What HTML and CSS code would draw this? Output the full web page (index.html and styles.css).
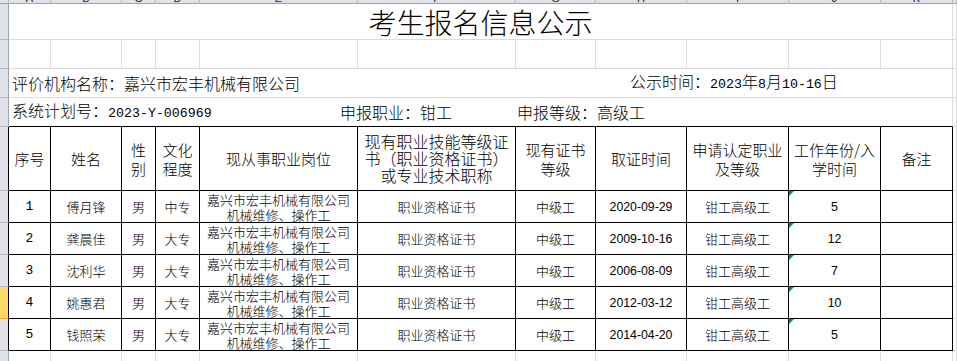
FILE: index.html
```html
<!DOCTYPE html>
<html lang="zh-CN">
<head>
<meta charset="utf-8">
<title>考生报名信息公示</title>
<link rel="stylesheet" href="styles.css">
</head>
<body>
<div class="sheet">
  <!-- column header strip -->
  <div class="ch"></div>
  <div class="ch"><span>A</span></div>
  <div class="ch"><span>B</span></div>
  <div class="ch"><span>C</span></div>
  <div class="ch"><span>D</span></div>
  <div class="ch"><span>E</span></div>
  <div class="ch"><span>F</span></div>
  <div class="ch"><span>G</span></div>
  <div class="ch"><span>H</span></div>
  <div class="ch"><span>I</span></div>
  <div class="ch"><span>J</span></div>
  <div class="ch"><span>K</span></div>
  <div class="ch"></div>

  <!-- row 1 : title -->
  <div class="rh"></div>
  <div class="c span title">考生报名信息公示</div>
  <div class="c"></div>

  <!-- row 2 : empty -->
  <div class="rh"></div>
  <div class="c"></div><div class="c"></div><div class="c"></div><div class="c"></div>
  <div class="c"></div><div class="c"></div><div class="c"></div><div class="c"></div>
  <div class="c"></div><div class="c"></div><div class="c"></div><div class="c"></div>

  <!-- row 3 -->
  <div class="rh"></div>
  <div class="c span info">
    <span class="w618">评价机构名称：嘉兴市宏丰机械有限公司</span>
    <span>公示时间：<span class="mono">2023</span>年<span class="mono">8</span>月<span class="mono">10-16</span>日</span>
  </div>
  <div class="c"></div>

  <!-- row 4 -->
  <div class="rh"></div>
  <div class="c span info last">
    <span class="w328">系统计划号：<span class="mono">2023-Y-006969</span></span>
    <span class="w177">申报职业：钳工</span>
    <span>申报等级：高级工</span>
  </div>
  <div class="c"></div>

  <!-- row 5 : table header -->
  <div class="rh tb"></div>
  <div class="c t th">序号</div>
  <div class="c t th">姓名</div>
  <div class="c t th">性<br>别</div>
  <div class="c t th">文化<br>程度</div>
  <div class="c t th">现从事职业岗位</div>
  <div class="c t th three">现有职业技能等级证<br>书（职业资格证书）<br>或专业技术职称</div>
  <div class="c t th">现有证书<br>等级</div>
  <div class="c t th">取证时间</div>
  <div class="c t th">申请认定职业<br>及等级</div>
  <div class="c t th">工作年份/入<br>学时间</div>
  <div class="c t th">备注</div>
  <div class="c"></div>

  <!-- data rows -->
  <div class="rh tb"></div>
  <div class="c t seq">1</div>
  <div class="c t td">傅月锋</div>
  <div class="c t td">男</div>
  <div class="c t td">中专</div>
  <div class="c t td co">嘉兴市宏丰机械有限公司<br>机械维修、操作工</div>
  <div class="c t td">职业资格证书</div>
  <div class="c t td">中级工</div>
  <div class="c t num">2020-09-29</div>
  <div class="c t td">钳工高级工</div>
  <div class="c t num mark">5</div>
  <div class="c t"></div>
  <div class="c"></div>

  <div class="rh tb"></div>
  <div class="c t seq">2</div>
  <div class="c t td">龚晨佳</div>
  <div class="c t td">男</div>
  <div class="c t td">大专</div>
  <div class="c t td co">嘉兴市宏丰机械有限公司<br>机械维修、操作工</div>
  <div class="c t td">职业资格证书</div>
  <div class="c t td">中级工</div>
  <div class="c t num">2009-10-16</div>
  <div class="c t td">钳工高级工</div>
  <div class="c t num mark">12</div>
  <div class="c t"></div>
  <div class="c"></div>

  <div class="rh tb"></div>
  <div class="c t seq">3</div>
  <div class="c t td">沈利华</div>
  <div class="c t td">男</div>
  <div class="c t td">大专</div>
  <div class="c t td co">嘉兴市宏丰机械有限公司<br>机械维修、操作工</div>
  <div class="c t td">职业资格证书</div>
  <div class="c t td">中级工</div>
  <div class="c t num">2006-08-09</div>
  <div class="c t td">钳工高级工</div>
  <div class="c t num mark">7</div>
  <div class="c t"></div>
  <div class="c"></div>

  <div class="rh tb sel"></div>
  <div class="c t seq">4</div>
  <div class="c t td">姚惠君</div>
  <div class="c t td">男</div>
  <div class="c t td">大专</div>
  <div class="c t td co">嘉兴市宏丰机械有限公司<br>机械维修、操作工</div>
  <div class="c t td">职业资格证书</div>
  <div class="c t td">中级工</div>
  <div class="c t num">2012-03-12</div>
  <div class="c t td">钳工高级工</div>
  <div class="c t num mark">10</div>
  <div class="c t"></div>
  <div class="c"></div>

  <div class="rh tb"></div>
  <div class="c t seq">5</div>
  <div class="c t td">钱照荣</div>
  <div class="c t td">男</div>
  <div class="c t td">大专</div>
  <div class="c t td co">嘉兴市宏丰机械有限公司<br>机械维修、操作工</div>
  <div class="c t td">职业资格证书</div>
  <div class="c t td">中级工</div>
  <div class="c t num">2014-04-20</div>
  <div class="c t td">钳工高级工</div>
  <div class="c t num mark">5</div>
  <div class="c t"></div>
  <div class="c"></div>

  <!-- row 11 : empty -->
  <div class="rh"></div>
  <div class="c"></div><div class="c"></div><div class="c"></div><div class="c"></div>
  <div class="c"></div><div class="c"></div><div class="c"></div><div class="c"></div>
  <div class="c"></div><div class="c"></div><div class="c"></div><div class="c"></div>
</div>
</body>
</html>
```

FILE: styles.css
```css
html, body {
  margin: 0;
  padding: 0;
  background: #ffffff;
}

body {
  font-family: "Noto Sans CJK SC", "Noto Sans", sans-serif;
  font-weight: 300;
  color: #000;
}

.sheet {
  display: grid;
  grid-template-columns: 9px 42px 71px 34px 44px 158px 158px 80px 91px 102px 92px 72px 1fr;
  grid-template-rows: 4px 36px 29px 29px 29px 64px repeat(5, 32px) 30px;
  width: 957px;
  height: 361px;
  overflow: hidden;
}

/* column header strip */
.ch {
  box-sizing: border-box;
  background: #dfe3e8;
  border-right: 1px solid #b6bbc2;
  border-bottom: 1px solid #9ea4ac;
  overflow: hidden;
  text-align: center;
}

.ch span {
  display: block;
  font-family: "Liberation Sans", sans-serif;
  font-weight: 400;
  font-size: 11px;
  line-height: 11px;
  color: #222;
  transform: translateY(-7px);
}

/* row header */
.rh {
  box-sizing: border-box;
  background: #dfe3e8;
  border-right: 1px solid #9ea4ac;
  border-bottom: 1px solid #b6bbc2;
}

.rh.tb {
  border-right-color: #000;
}

.rh.sel {
  background: #ffd966;
  border-bottom-color: #e9a43a;
}

/* cells */
.c {
  box-sizing: border-box;
  border-right: 1px solid #dadcdd;
  border-bottom: 1px solid #dadcdd;
  display: flex;
  align-items: center;
  justify-content: center;
  text-align: center;
  min-width: 0;
  white-space: nowrap;
}

.span {
  grid-column: span 11;
}

.title {
  font-size: 28px;
  line-height: 32px;
  padding-top: 1px;
}

.info {
  justify-content: flex-start;
  text-align: left;
  padding-left: 3px;
  font-size: 16px;
  line-height: 20px;
}

.info.last {
  border-bottom-color: #000;
}

.w618 { width: 618px; flex: none; }
.w328 { width: 328px; flex: none; }
.w177 { width: 177px; flex: none; }

.mono {
  font-family: "Liberation Mono", monospace;
  font-weight: 400;
  font-size: 13.3px;
}

/* table */
.t {
  border-right-color: #000;
  border-bottom-color: #000;
}

.th {
  font-size: 15px;
  line-height: 19px;
}

.th.three {
  font-size: 16px;
  line-height: 17px;
}

.td {
  font-size: 13px;
  line-height: 15px;
}

.seq {
  font-family: "Liberation Mono", monospace;
  font-weight: 400;
  font-size: 13px;
}

.num {
  font-family: "Liberation Sans", Arial, sans-serif;
  font-weight: 400;
  font-size: 12.3px;
}

.mark {
  position: relative;
}

.mark::before {
  content: "";
  position: absolute;
  left: 0;
  top: 0;
  width: 0;
  height: 0;
  border-top: 5px solid #1d8a35;
  border-right: 5px solid transparent;
}
```
